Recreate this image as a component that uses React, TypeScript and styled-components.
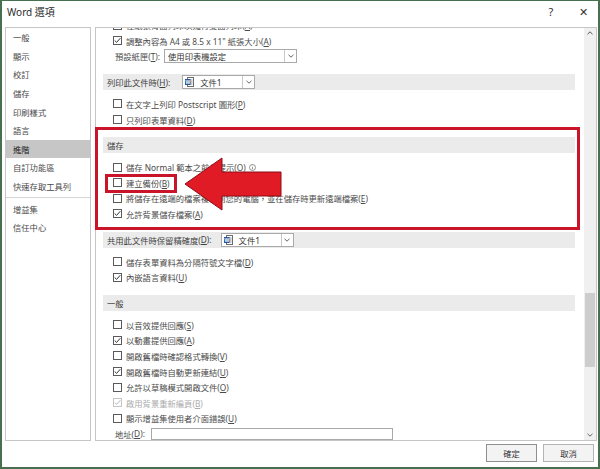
import React from 'react';
import styled, { createGlobalStyle } from 'styled-components';

const Global = createGlobalStyle`
  html, body { margin: 0; padding: 0; background: #fff; }
  #root { width: 600px; height: 469px; }
`;

const FONT = `"Noto Sans", "Noto Sans CJK TC", sans-serif`;

const Window = styled.div`
  position: relative;
  width: 600px;
  height: 469px;
  box-sizing: border-box;
  border: 2px solid #46704f;
  border-top-width: 1px;
  background: #fff;
  display: grid;
  grid-template-rows: 26px 414px 1fr;
  overflow: hidden;
  font-family: ${FONT};
  font-size: 8.3px;
  color: #4a4a4a;
`;

const TitleBar = styled.div`
  display: flex;
  align-items: center;
  padding: 0 0 6px 5px;
`;

const Title = styled.div`
  flex: 1;
  font-size: 10px;
  color: #2a2a2a;
`;

const TitleButtons = styled.div`
  display: flex;
  gap: 2px;
`;

const TitleButton = styled.div`
  width: 30px;
  display: flex;
  justify-content: center;
  align-items: center;
  font-size: 11px;
  color: #333;
`;

const Body = styled.div`
  display: flex;
  gap: 4px;
  padding: 0 1px 0 3px;
`;

const NavPanel = styled.div`
  width: 86px;
  box-sizing: border-box;
  border: 1px solid #c6c6c6;
  display: flex;
  flex-direction: column;
`;

const NavItem = styled.div<{ $selected?: boolean }>`
  height: 18.6px;
  display: flex;
  align-items: center;
  padding-left: 7px;
  background: ${p => (p.$selected ? '#c6c6c6' : 'transparent')};
  color: ${p => (p.$selected ? '#222' : '#4a4a4a')};
  white-space: nowrap;
`;

const NavSeparator = styled.div`
  height: 1px;
  background: #d6d6d6;
  margin: 1.5px 0;
`;

const MainPanel = styled.div`
  flex: 1;
  box-sizing: border-box;
  border: 1px solid #c6c6c6;
  display: flex;
  min-width: 0;
`;

const Content = styled.div`
  flex: 1;
  min-width: 0;
  overflow: hidden;
  padding: 0 9px 0 7px;
  display: flex;
  flex-direction: column;
`;

const Group = styled.div<{ $top?: boolean }>`
  display: flex;
  flex-direction: column;
  padding: ${p => (p.$top ? '0 0 10px' : '6px 0 10px')};
`;

const Band = styled.div`
  height: 16px;
  flex: none;
  background: #ebebeb;
  display: flex;
  align-items: center;
  padding-left: 4px;
  color: #404040;
`;

const Row = styled.div<{ $clipTop?: boolean; $disabled?: boolean; $indent?: number }>`
  height: 15.6px;
  flex: none;
  display: flex;
  align-items: center;
  padding-left: ${p => p.$indent ?? 10}px;
  margin-top: ${p => (p.$clipTop ? '-10.6px' : '0')};
  color: ${p => (p.$disabled ? '#acacac' : '#4a4a4a')};
  white-space: nowrap;
`;

const Box = styled.span<{ $disabled?: boolean }>`
  width: 9px;
  height: 9px;
  box-sizing: border-box;
  border: 1px solid ${p => (p.$disabled ? '#c4c4c4' : '#5a5a5a')};
  background: #fff;
  flex: none;
  display: flex;
  align-items: center;
  justify-content: center;
  margin-right: 4px;
`;

const Select = styled.div<{ $width: number; $gap?: number }>`
  width: ${p => p.$width}px;
  height: 14px;
  box-sizing: border-box;
  border: 1px solid #a9a9a9;
  background: #fff;
  display: flex;
  align-items: center;
  margin-left: ${p => p.$gap ?? 4}px;
  color: #333;
`;

const SelectText = styled.span<{ $pad?: number }>`
  flex: 1;
  padding-left: ${p => p.$pad ?? 3}px;
  display: flex;
  align-items: center;
  gap: 6px;
`;

const Chevron = styled.span`
  width: 12px;
  height: 100%;
  box-sizing: border-box;
  border-left: 1px solid #c8c8c8;
  display: flex;
  align-items: center;
  justify-content: center;
`;

const TextInput = styled.div`
  width: 242px;
  height: 12px;
  box-sizing: border-box;
  border: 1px solid #a9a9a9;
  margin-left: 6px;
`;

const Scrollbar = styled.div`
  width: 12px;
  flex: none;
  background: #f0f0f0;
  display: flex;
  flex-direction: column;
  align-items: center;
`;

const ScrollArrow = styled.div<{ $bottom?: boolean }>`
  width: 12px;
  height: 10px;
  flex: none;
  display: flex;
  align-items: center;
  justify-content: center;
  margin-top: ${p => (p.$bottom ? 'auto' : '0')};
`;

const Thumb = styled.div`
  width: 10px;
  height: 74px;
  background: #cdcdcd;
  margin-top: 255px;
`;

const Footer = styled.div`
  display: flex;
  justify-content: flex-end;
  align-items: flex-start;
  gap: 6px;
  padding: 3px 4px 0 0;
`;

const Button = styled.div<{ $default?: boolean }>`
  width: 51px;
  height: 18px;
  box-sizing: border-box;
  border: 1px solid ${p => (p.$default ? '#8f8f8f' : '#b4b4b4')};
  background: #f3f3f3;
  display: flex;
  align-items: center;
  justify-content: center;
  color: #333;
`;

const RedFrame = styled.div<{ $l: number; $t: number; $w: number; $h: number }>`
  position: absolute;
  left: ${p => p.$l}px;
  top: ${p => p.$t}px;
  width: ${p => p.$w}px;
  height: ${p => p.$h}px;
  box-sizing: border-box;
  border: 3px solid #c9142a;
  pointer-events: none;
`;

const Arrow = styled.svg`
  position: absolute;
  left: 181px;
  top: 153px;
`;

const Check = ({ disabled }: { disabled?: boolean }) => (
  <svg width="7" height="7" viewBox="0 0 7 7">
    <polyline
      points="0.7,3.5 2.6,5.4 6.3,1.2"
      fill="none"
      stroke={disabled ? '#b5b5b5' : '#333'}
      strokeWidth="1"
    />
  </svg>
);

const ChevronDown = () => (
  <svg width="6" height="4" viewBox="0 0 6 4">
    <polyline points="0.5,0.8 3,3.2 5.5,0.8" fill="none" stroke="#555" strokeWidth="0.9" />
  </svg>
);

const ChevronUp = () => (
  <svg width="6" height="4" viewBox="0 0 6 4">
    <polyline points="0.5,3.2 3,0.8 5.5,3.2" fill="none" stroke="#555" strokeWidth="1" />
  </svg>
);

const DocIcon = () => (
  <svg width="9" height="10" viewBox="0 0 9 10">
    <rect x="2.5" y="0.5" width="6" height="9" fill="#fff" stroke="#6b6b6b" />
    <line x1="5" y1="3" x2="7.5" y2="3" stroke="#8a8a8a" />
    <line x1="5" y1="5" x2="7.5" y2="5" stroke="#8a8a8a" />
    <line x1="5" y1="7" x2="7.5" y2="7" stroke="#8a8a8a" />
    <rect x="0" y="2" width="5.5" height="6" fill="#2b579a" />
    <text x="2.75" y="6.8" fontSize="5" fill="#fff" textAnchor="middle" fontFamily="Liberation Sans, sans-serif" fontWeight="bold">W</text>
  </svg>
);

const InfoIcon = () => (
  <svg width="7" height="7" viewBox="0 0 7 7" style={{ marginLeft: 3 }}>
    <circle cx="3.5" cy="3.5" r="3" fill="none" stroke="#777" strokeWidth="0.8" />
    <line x1="3.5" y1="3" x2="3.5" y2="5.3" stroke="#777" strokeWidth="0.8" />
    <circle cx="3.5" cy="1.9" r="0.45" fill="#777" />
  </svg>
);

type CheckRowProps = {
  checked?: boolean;
  disabled?: boolean;
  clipTop?: boolean;
  children: React.ReactNode;
};

const CheckRow = ({ checked, disabled, clipTop, children }: CheckRowProps) => (
  <Row $clipTop={clipTop} $disabled={disabled}>
    <Box $disabled={disabled}>{checked && <Check disabled={disabled} />}</Box>
    <span>{children}</span>
  </Row>
);

const M = ({ k }: { k: string }) => (
  <>
    (<u>{k}</u>)
  </>
);

const DocSelect = ({ gap }: { gap: number }) => (
  <Select $width={73} $gap={gap}>
    <SelectText $pad={2}>
      <DocIcon />
      文件1
    </SelectText>
    <Chevron>
      <ChevronDown />
    </Chevron>
  </Select>
);

const navTop = ['一般', '顯示', '校訂', '儲存', '印刷樣式', '語言', '進階', '自訂功能區', '快速存取工具列'];
const navBottom = ['增益集', '信任中心'];

export default function App() {
  return (
    <>
      <Global />
      <Window>
        <TitleBar>
          <Title>Word 選項</Title>
          <TitleButtons>
            <TitleButton>?</TitleButton>
            <TitleButton>✕</TitleButton>
          </TitleButtons>
        </TitleBar>

        <Body>
          <NavPanel>
            {navTop.map(n => (
              <NavItem key={n} $selected={n === '進階'}>
                {n}
              </NavItem>
            ))}
            <NavSeparator />
            {navBottom.map(n => (
              <NavItem key={n}>{n}</NavItem>
            ))}
          </NavPanel>

          <MainPanel>
            <Content>
              <Group $top>
                <CheckRow clipTop>
                  在紙張背面列印以進行雙面列印<M k="A" />
                </CheckRow>
                <CheckRow checked>
                  調整內容為 A4 或 8.5 x 11" 紙張大小<M k="A" />
                </CheckRow>
                <Row $indent={12}>
                  預設紙匣<M k="T" />:
                  <Select $width={133} $gap={4}>
                    <SelectText>使用印表機設定</SelectText>
                    <Chevron>
                      <ChevronDown />
                    </Chevron>
                  </Select>
                </Row>
              </Group>

              <Band>
                列印此文件時<M k="H" />:
                <DocSelect gap={12} />
              </Band>
              <Group>
                <CheckRow>
                  在文字上列印 Postscript 圖形<M k="P" />
                </CheckRow>
                <CheckRow>
                  只列印表單資料<M k="D" />
                </CheckRow>
              </Group>

              <Band>儲存</Band>
              <Group>
                <CheckRow>
                  儲存 Normal 範本之前先提示<M k="O" />
                  <InfoIcon />
                </CheckRow>
                <CheckRow>
                  建立備份<M k="B" />
                </CheckRow>
                <CheckRow>
                  將儲存在遠端的檔案複製到您的電腦，並在儲存時更新遠端檔案<M k="E" />
                </CheckRow>
                <CheckRow checked>
                  允許背景儲存檔案<M k="A" />
                </CheckRow>
              </Group>

              <Band>
                共用此文件時保留精確度<M k="D" />:
                <DocSelect gap={9} />
              </Band>
              <Group>
                <CheckRow>
                  儲存表單資料為分隔符號文字檔<M k="D" />
                </CheckRow>
                <CheckRow checked>
                  內嵌語言資料<M k="U" />
                </CheckRow>
              </Group>

              <Band>一般</Band>
              <Group>
                <CheckRow>
                  以音效提供回應<M k="S" />
                </CheckRow>
                <CheckRow checked>
                  以動畫提供回應<M k="A" />
                </CheckRow>
                <CheckRow>
                  開啟舊檔時確認格式轉換<M k="V" />
                </CheckRow>
                <CheckRow checked>
                  開啟舊檔時自動更新連結<M k="U" />
                </CheckRow>
                <CheckRow>
                  允許以草稿模式開啟文件<M k="O" />
                </CheckRow>
                <CheckRow checked disabled>
                  啟用背景重新編頁<M k="B" />
                </CheckRow>
                <CheckRow>
                  顯示增益集使用者介面錯誤<M k="U" />
                </CheckRow>
                <Row $indent={12}>
                  地址<M k="D" />:
                  <TextInput />
                </Row>
              </Group>
            </Content>
            <Scrollbar>
              <ScrollArrow>
                <ChevronUp />
              </ScrollArrow>
              <Thumb />
              <ScrollArrow $bottom>
                <ChevronDown />
              </ScrollArrow>
            </Scrollbar>
          </MainPanel>
        </Body>

        <Footer>
          <Button $default>確定</Button>
          <Button>取消</Button>
        </Footer>

        <RedFrame $l={93} $t={126} $w={485} $h={103} />
        <RedFrame $l={103} $t={173} $w={72} $h={19} />
        <Arrow width="102" height="60" viewBox="0 0 102 60">
          <polygon
            points="2,30 39,4 39,18 98,18 98,42 39,42 39,56"
            fill="#e01b26"
            stroke="#8e0c12"
            strokeWidth="1"
            strokeLinejoin="miter"
          />
        </Arrow>
      </Window>
    </>
  );
}
